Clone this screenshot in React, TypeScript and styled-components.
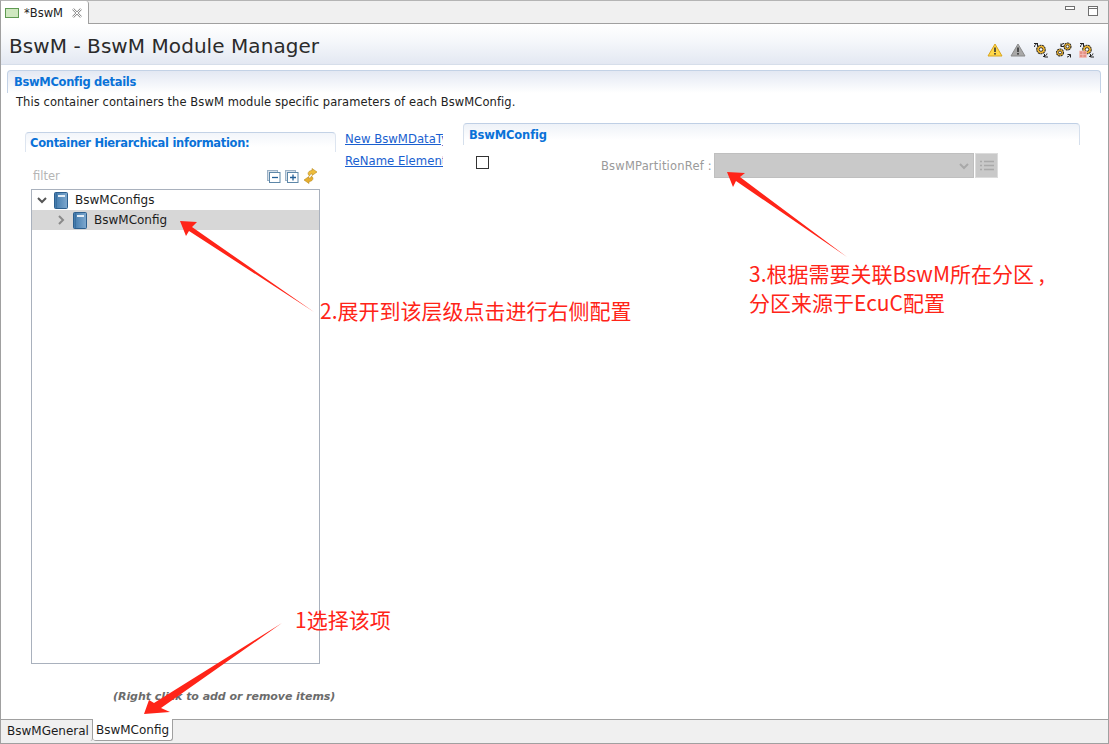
import React from 'react';
import styled, { createGlobalStyle } from 'styled-components';

const uiFont = `"DejaVu Sans", Verdana, sans-serif`;

const GlobalStyle = createGlobalStyle`
    html, body {
        margin: 0;
        padding: 0;
        background: #ffffff;
    }
    body {
        font-family: ${uiFont};
    }
`;

const Window = styled.div`
    position: relative;
    width: 1109px;
    height: 744px;
    box-sizing: border-box;
    display: flex;
    flex-direction: column;
    background: #ffffff;
    border: 1px solid #a0a0a0;
    border-top-color: #b4b4b4;
    overflow: hidden;
`;

const EditorTabBar = styled.div`
    height: 22px;
    flex: none;
    display: flex;
    justify-content: space-between;
    background: #f0f0f0;
    border-bottom: 1px solid #a0a0a0;
`;

const EditorTab = styled.div`
    width: 88px;
    height: 23px;
    box-sizing: border-box;
    display: flex;
    align-items: center;
    padding: 0 0 0 4px;
    background: #ffffff;
    border-right: 1px solid #a0a0a0;
    border-top-right-radius: 3px;
    font-size: 11.5px;
    color: #222222;
`;

const TabLabel = styled.span`
    margin: 0 9px 0 4px;
`;

const WindowButtons = styled.div`
    display: flex;
    gap: 13px;
    padding: 5px 10px 0 0;
    align-items: flex-start;
`;

const TitleBar = styled.div`
    height: 40px;
    flex: none;
    display: flex;
    align-items: flex-start;
    justify-content: space-between;
    background: linear-gradient(#ffffff 0%, #f6f8fb 40%, #e3e8f2 100%);
    border-bottom: 1px solid #d6deea;
    padding: 0 13px 0 8px;
`;

const Title = styled.h1`
    margin: 9px 0 0;
    font-size: 20px;
    line-height: 26px;
    font-weight: 400;
    color: #2b2b2b;
    letter-spacing: 0.06px;
`;

const TitleTools = styled.div`
    display: flex;
    align-items: center;
    gap: 7px;
    padding-top: 18px;
`;

const DetailsSection = styled.section`
    margin: 5px 7px 0 6px;
    flex: none;
`;

const SectionHead = styled.div`
    height: 23px;
    box-sizing: border-box;
    border: 1px solid #c3d2e6;
    border-bottom: none;
    border-radius: 4px 4px 0 0;
    background: linear-gradient(#e3e8f3, #ffffff);
    padding: 3px 0 0 6px;
`;

const SectionTitle = styled.div<{ $large?: boolean }>`
    font-size: 11.5px;
    line-height: 16px;
    font-weight: 700;
    color: #0a72d8;
    letter-spacing: ${p => (p.$large ? -0.15 : -0.3)}px;
    white-space: nowrap;
`;

const Description = styled.p`
    margin: 1px 0 0 9px;
    font-size: 11.5px;
    line-height: 16px;
    color: #222222;
    letter-spacing: 0.08px;
`;

const MainRow = styled.div`
    flex: 1;
    display: flex;
    align-items: flex-start;
    padding: 22px 0 0 24px;
    min-height: 0;
`;

const TreePane = styled.div`
    width: 311px;
    flex: none;
`;

const PaneHead = styled.div`
    height: 20px;
    box-sizing: border-box;
    border-top: 1px solid #c3d2e6;
    border-left: 1px solid #dde5f0;
    border-right: 1px solid #dde5f0;
    border-radius: 4px 4px 0 0;
    background: linear-gradient(#f2f5fa, #ffffff 14px);
    padding: 2px 0 0 4px;
`;

const FilterRow = styled.div`
    display: flex;
    align-items: center;
    justify-content: space-between;
    height: 16px;
    margin: 16px 18px 0 8px;
`;

const FilterHint = styled.span`
    font-size: 11.5px;
    color: #b5b5b5;
`;

const FilterTools = styled.div`
    display: flex;
    gap: 4px;
    align-items: center;
`;

const TreeBox = styled.div`
    margin: 5px 0 0 6px;
    width: 289px;
    height: 475px;
    box-sizing: border-box;
    border: 1px solid #a9b1bd;
`;

const TreeRow = styled.div<{ $selected?: boolean; $depth: number }>`
    height: 20px;
    display: flex;
    align-items: center;
    gap: 7px;
    padding-left: ${p => 5 + p.$depth * 19}px;
    background: ${p => (p.$selected ? '#d7d7d7' : 'transparent')};
    font-size: 12px;
    color: #1c1c1c;
`;

const Hint = styled.div`
    margin: 25px 0 0 88px;
    font-size: 11px;
    line-height: 16px;
    font-weight: 700;
    font-style: italic;
    color: #6b6b6b;
    letter-spacing: -0.05px;
    white-space: nowrap;
`;

const LinkColumn = styled.div`
    width: 98px;
    flex: none;
    margin: -1px 0 0 9px;
    display: flex;
    flex-direction: column;
    gap: 6px;
    overflow: hidden;
`;

const LinkItem = styled.a`
    display: block;
    font-size: 11.7px;
    line-height: 16px;
    color: #1a5fd0;
    text-decoration: underline;
    white-space: nowrap;
`;

const ConfigPane = styled.div`
    width: 617px;
    flex: none;
    margin: -9px 0 0 20px;
`;

const ConfigHead = styled.div`
    height: 22px;
    box-sizing: border-box;
    border-top: 1px solid #bfcfe5;
    border-left: 1px solid #d5dfec;
    border-right: 1px solid #d5dfec;
    border-radius: 4px 4px 0 0;
    background: linear-gradient(#eef2f8, #ffffff 16px);
    padding: 3px 0 0 5px;
`;

const ConfigRow = styled.div`
    display: flex;
    align-items: center;
    margin-top: 8px;
    padding-left: 13px;
`;

const CheckBox = styled.span`
    width: 11px;
    height: 11px;
    flex: none;
    border: 1px solid #333333;
    background: #ffffff;
    margin-top: -6px;
`;

const FieldLabel = styled.span`
    margin-left: 112px;
    width: 112px;
    flex: none;
    font-size: 11.5px;
    color: #9a9a9a;
    letter-spacing: 0.2px;
    white-space: nowrap;
`;

const DisabledSelect = styled.div`
    width: 260px;
    height: 25px;
    box-sizing: border-box;
    display: flex;
    align-items: center;
    justify-content: flex-end;
    padding-right: 4px;
    background: #c9c9c9;
    border: 1px solid #bfbfbf;
    margin-left: 1px;
`;

const ListButton = styled.div`
    width: 23px;
    height: 25px;
    box-sizing: border-box;
    margin-left: 1px;
    display: flex;
    align-items: center;
    justify-content: center;
    background: #c9c9c9;
    border: 1px solid #dcdcdc;
`;

const PageTabBar = styled.div`
    height: 24px;
    flex: none;
    display: flex;
    background: #f0f0f0;
    border-top: 1px solid #a0a0a0;
    box-sizing: border-box;
    margin-top: auto;
`;

const PageTab = styled.div<{ $active?: boolean }>`
    height: 22px;
    margin-top: -1px;
    box-sizing: border-box;
    padding: 0 3px 0 ${p => (p.$active ? 3 : 6)}px;
    display: flex;
    align-items: center;
    font-size: 12px;
    color: #1c1c1c;
    background: ${p => (p.$active ? '#ffffff' : 'transparent')};
    border-right: 1px solid #a0a0a0;
    border-bottom: ${p => (p.$active ? '1px solid #a0a0a0' : 'none')};
    border-top: ${p => (p.$active ? 'none' : '1px solid #a0a0a0')};
    border-radius: 0 0 3px 3px;
`;

const Arrow = styled.svg`
    position: absolute;
    left: -1px;
    top: -1px;
    width: 1109px;
    height: 744px;
    pointer-events: none;
`;

const Note = styled.div<{ $x: number; $y: number }>`
    position: absolute;
    left: ${p => p.$x}px;
    top: ${p => p.$y}px;
    font-family: "Noto Sans CJK SC", "Liberation Sans", sans-serif;
    font-size: 21px;
    line-height: 29px;
    color: #ff2418;
    white-space: nowrap;
`;

const BookIcon = () => (
    <svg width="14" height="17" viewBox="0 0 14 17">
        <defs>
            <linearGradient id="bookFill" x1="0" y1="0" x2="1" y2="0">
                <stop offset="0" stopColor="#3f78ab" />
                <stop offset="1" stopColor="#7fa9cf" />
            </linearGradient>
        </defs>
        <rect x="0.5" y="0.5" width="13" height="16" rx="1" fill="url(#bookFill)" stroke="#2d5f8e" />
        <rect x="4" y="3" width="7" height="2" fill="#e4eef7" />
        <path d="M2.5 1v15" stroke="#2d5f8e" strokeOpacity="0.5" />
    </svg>
);

const Chevron = ({ down, color }: { down?: boolean; color: string }) => (
    <svg width="10" height="10" viewBox="0 0 10 10">
        <path d={down ? 'M1 3l4 4 4-4' : 'M3 1l4 4-4 4'} fill="none" stroke={color} strokeWidth="2" />
    </svg>
);

const CollapseIcon = ({ plus }: { plus?: boolean }) => (
    <svg width="14" height="13" viewBox="0 0 14 13">
        <rect x="0.5" y="0.5" width="10" height="10" fill="#d5dfe9" stroke="#9db2c6" />
        <rect x="2.5" y="2.5" width="10.5" height="10" fill="#ffffff" stroke="#5d87a8" />
        <path d={plus ? 'M5 7.5h6M8 4.5v6' : 'M5 7.5h6'} stroke="#245f96" strokeWidth="1.3" />
    </svg>
);

const syncArrow = 'M5 6C5 3.500 7 2.500 9 2.500V0.500L14 4 9 7.500V5.500C8 5.500 7 6.500 6.500 8z';

const SyncIcon = () => (
    <svg width="15" height="16" viewBox="0 0 15 16">
        <path d={syncArrow} fill="#eebd3c" stroke="#b98a1f" strokeWidth="0.6" />
        <path d={syncArrow} fill="#e6ae2e" stroke="#b98a1f" strokeWidth="0.6" transform="rotate(180 7.5 8)" />
    </svg>
);

const WarnIcon = ({ fill, stroke }: { fill: string; stroke: string }) => (
    <svg width="16" height="14" viewBox="0 0 16 14">
        <path d="M8 1L15 13H1z" fill={fill} stroke={stroke} strokeLinejoin="round" />
        <rect x="7.2" y="4.5" width="1.6" height="4.5" fill="#333333" />
        <rect x="7.2" y="10" width="1.6" height="1.6" fill="#333333" />
    </svg>
);

const Gear = ({ x, y, r }: { x: number; y: number; r: number }) => (
    <g>
        <circle cx={x} cy={y} r={r} fill="#f2b72e" stroke="#2a2a2a" strokeWidth="1.1" strokeDasharray="2 0.6" />
        <circle cx={x} cy={y} r={r * 0.42} fill="#ffffff" stroke="#2a2a2a" strokeWidth="0.9" />
    </g>
);

const GearIcon = ({ variant }: { variant: 'one' | 'two' | 'grid' }) => (
    <svg width="16" height="16" viewBox="0 0 16 16">
        {variant === 'two' ? (
            <>
                <Gear x={11.5} y={4.5} r={3.5} />
                <Gear x={4} y={10.5} r={3.5} />
                <path d="M5 4.5C5 2.500 6.500 1.500 8 1.500M5 1.500v3h3M11 15c1.500 0 2.500-1 3-2.500M14.500 15.500v-3h-3" stroke="#222222" strokeWidth="1" fill="none" />
            </>
        ) : (
            <>
                <Gear x={8} y={7.5} r={4.3} />
                <path d="M1.500 5C1.500 3 3 1.500 5 1.500M1 1.500h3.500v3M10 14.500c2 0 3.500-1 4-3M15 15h-3.500v-3" stroke="#222222" strokeWidth="1" fill="none" />
            </>
        )}
        {variant === 'grid' && (
            <g fill="#e58f85" stroke="#f4c4bd" strokeWidth="0.6">
                <rect x="0.5" y="9" width="3.5" height="3.3" />
                <rect x="4" y="9" width="3.5" height="3.3" />
                <rect x="0.5" y="12.3" width="3.5" height="3.3" />
                <rect x="4" y="12.3" width="3.5" height="3.3" />
            </g>
        )}
    </svg>
);

const App = () => (
    <>
        <GlobalStyle />
        <Window>
            <EditorTabBar>
                <EditorTab>
                    <svg width="15" height="12" viewBox="0 0 15 12">
                        <rect x="0.5" y="1.5" width="13" height="9" fill="#cfe8c0" stroke="#5f9a52" />
                    </svg>
                    <TabLabel>*BswM</TabLabel>
                    <svg width="10" height="10" viewBox="0 0 10 10">
                        <path d="M1 1l8 8M9 1l-8 8" stroke="#8c8c8c" strokeWidth="2.4" fill="none" />
                        <path d="M1 1l8 8M9 1l-8 8" stroke="#ffffff" strokeWidth="1" fill="none" />
                    </svg>
                </EditorTab>
                <WindowButtons>
                    <svg width="10" height="5" viewBox="0 0 10 5">
                        <rect x="0.5" y="0.5" width="9" height="3" fill="#ffffff" stroke="#6f6f6f" />
                    </svg>
                    <svg width="10" height="11" viewBox="0 0 10 11">
                        <rect x="0.5" y="0.5" width="9" height="9" fill="#ffffff" stroke="#6f6f6f" />
                        <path d="M0 2.5h10" stroke="#6f6f6f" />
                    </svg>
                </WindowButtons>
            </EditorTabBar>
            <TitleBar>
                <Title>BswM - BswM Module Manager</Title>
                <TitleTools>
                    <WarnIcon fill="#ffd84a" stroke="#d9a520" />
                    <WarnIcon fill="#a8a8a8" stroke="#8a8a8a" />
                    <GearIcon variant="one" />
                    <GearIcon variant="two" />
                    <GearIcon variant="grid" />
                </TitleTools>
            </TitleBar>
            <DetailsSection>
                <SectionHead>
                    <SectionTitle>BswMConfig details</SectionTitle>
                </SectionHead>
                <Description>This container containers the BswM module specific parameters of each BswMConfig.</Description>
            </DetailsSection>
            <MainRow>
                <TreePane>
                    <PaneHead>
                        <SectionTitle>Container Hierarchical information:</SectionTitle>
                    </PaneHead>
                    <FilterRow>
                        <FilterHint>filter</FilterHint>
                        <FilterTools>
                            <CollapseIcon />
                            <CollapseIcon plus />
                            <SyncIcon />
                        </FilterTools>
                    </FilterRow>
                    <TreeBox>
                        <TreeRow $depth={0}>
                            <Chevron down color="#555555" />
                            <BookIcon />
                            <span>BswMConfigs</span>
                        </TreeRow>
                        <TreeRow $depth={1} $selected>
                            <Chevron color="#8a8a8a" />
                            <BookIcon />
                            <span>BswMConfig</span>
                        </TreeRow>
                    </TreeBox>
                    <Hint>(Right click to add or remove items)</Hint>
                </TreePane>
                <LinkColumn>
                    <LinkItem>New BswMDataType</LinkItem>
                    <LinkItem>ReName Element</LinkItem>
                </LinkColumn>
                <ConfigPane>
                    <ConfigHead>
                        <SectionTitle $large>BswMConfig</SectionTitle>
                    </ConfigHead>
                    <ConfigRow>
                        <CheckBox />
                        <FieldLabel>BswMPartitionRef :</FieldLabel>
                        <DisabledSelect>
                            <Chevron down color="#a8a8a8" />
                        </DisabledSelect>
                        <ListButton>
                            <svg width="14" height="11" viewBox="0 0 14 11">
                                <path d="M0 1.5h2M4 1.5h10M0 5.5h2M4 5.5h10M0 9.5h2M4 9.5h10" stroke="#a9a9a9" strokeWidth="1.4" />
                            </svg>
                        </ListButton>
                    </ConfigRow>
                </ConfigPane>
            </MainRow>
            <PageTabBar>
                <PageTab>BswMGeneral</PageTab>
                <PageTab $active>BswMConfig</PageTab>
            </PageTabBar>

            <Arrow viewBox="0 0 1109 744">
                <polygon points="180,221 197,222 192,227 314,312 189,231 186,236" fill="#ff2418" />
                <polygon points="727,172 745,173 740,177 847,257 736,181 733,187" fill="#ff2418" />
                <polygon points="144,714 149,700 154,703 282,623 161,708 170,712" fill="#ff2418" />
            </Arrow>
            <Note $x={319} $y={295}>2.展开到该层级点击进行右侧配置</Note>
            <Note $x={748} $y={258}>3.根据需要关联BswM所在分区 ,<br />分区来源于EcuC配置</Note>
            <Note $x={294} $y={604}>1选择该项</Note>
        </Window>
    </>
);

export default App;
